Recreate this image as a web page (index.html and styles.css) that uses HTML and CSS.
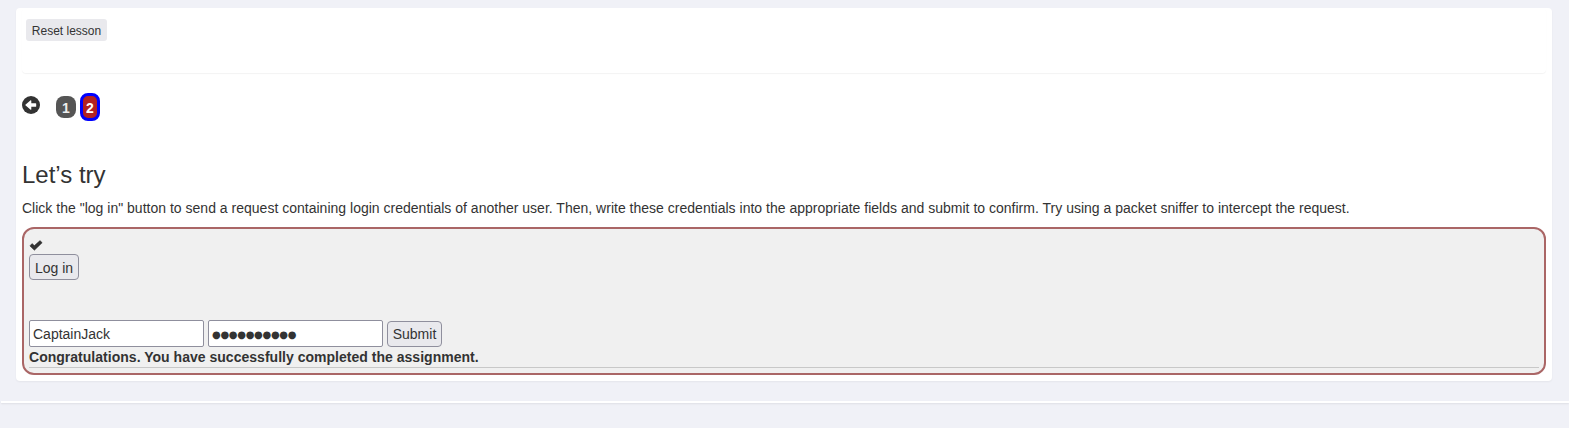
FILE: index.html
```
<!DOCTYPE html>
<html lang="en">
<head>
<meta charset="utf-8">
<title>Lesson</title>
<link rel="stylesheet" href="styles.css">
</head>
<body>
<main class="page">
  <section class="card">
    <div class="toolbar"><button class="reset" type="button">Reset lesson</button></div>
    <nav class="pager">
      <svg class="back" viewBox="0 0 18 18" aria-hidden="true"><circle cx="9" cy="9" r="9" fill="#333"/><path d="M3.1 9 8.6 4.2Q9.3 4 9.3 4.8V7.2H13.6Q14.2 7.2 14.2 7.8V10.2Q14.2 10.8 13.6 10.8H9.3V13.2Q9.3 14 8.6 13.8Z" fill="#fff"/></svg>
      <span class="step">1</span>
      <span class="step current">2</span>
    </nav>
    <h2 class="title">Let’s try</h2>
    <p class="intro">Click the "log in" button to send a request containing login credentials of another user. Then, write these credentials into the appropriate fields and submit to confirm. Try using a packet sniffer to intercept the request.</p>
    <div class="attack">
      <svg class="check" viewBox="0 0 14 11" aria-hidden="true"><path d="M.9 5.9 3 3.6 5.4 5.6 11 .6 13.2 2.7 5.4 10.3Z" fill="#333" stroke="#333" stroke-width=".5" stroke-linejoin="round"/></svg>
      <button class="btn login" type="button">Log in</button>
      <form class="credentials">
        <input class="field" type="text" value="CaptainJack">
        <div class="field secret">●●●●●●●●●●</div>
        <button class="btn submit" type="button">Submit</button>
      </form>
      <div class="feedback">Congratulations. You have successfully completed the assignment.</div>
    </div>
  </section>
  <div class="strip"></div>
</main>
</body>
</html>
```
FILE: styles.css
```
* { box-sizing: border-box; }
body {
  margin: 0;
  background: #fff;
  color: #333;
  font: 14px/20px "Liberation Sans", Arial, sans-serif;
}
button, input { font: inherit; color: inherit; margin: 0; }
.page { height: 428px; padding: 8px 0 0; background: #f0f1f7; }
.card {
  height: 373px;
  margin: 0 17px 0 16px;
  padding: 0 6px;
  background: #fff;
  border-radius: 4px;
  box-shadow: 0 1px 2px rgba(0, 0, 0, .05);
}
.toolbar {
  height: 65px;
  padding: 11px 4px 0;
  border-radius: 4px;
  box-shadow: 0 1px 1px rgba(0, 0, 0, .05);
}
.reset {
  display: block;
  width: 81px;
  height: 22px;
  padding: 2px 0 0;
  border: 0;
  border-radius: 3px;
  background: #e9e9ed;
  font-size: 12px;
  line-height: 18px;
}
.pager { display: flex; align-items: flex-start; height: 48px; padding-top: 20px; }
.back { width: 18px; height: 18px; margin: 3px 16px 0 0; }
.step {
  width: 20px;
  height: 22px;
  margin: 3px 4px 0 0;
  border-radius: 8px;
  background: #555;
  color: #eee;
  font-weight: bold;
  line-height: 24px;
  text-align: center;
}
.current {
  height: 28px;
  margin-top: 0;
  border: 3px solid #00f;
  background: #b22222;
  color: #fff;
}
.title { margin: 41px 0 0; font-size: 24px; font-weight: 400; line-height: 26px; }
.intro { margin: 10px 0 9px; white-space: nowrap; letter-spacing: .01px; }
.attack {
  height: 148px;
  padding: 11px 5px 0;
  border: 2px solid #a66;
  border-radius: 12px;
  background: #f0f0f0;
}
.check { display: block; width: 14px; height: 11px; }
.btn {
  display: block;
  height: 26px;
  padding: 0;
  border: 1px solid #8f8f9d;
  border-radius: 4px;
  background: #e9e9ed;
}
.login { width: 50px; margin-top: 3px; padding-top: 2px; }
.credentials { display: flex; gap: 4px; margin: 40px 0 0; }
.field {
  width: 175px;
  height: 27px;
  padding: 1px 3px;
  border: 1px solid #8f8f9d;
  border-radius: 2px;
  background: #fff;
}
.secret {
  padding-top: 3px;
  font-family: "DejaVu Sans", sans-serif;
  font-size: 10px;
  line-height: 21px;
  letter-spacing: -.31px;
}
.submit { width: 55px; margin-top: 1px; }
.feedback {
  height: 21px;
  border-bottom: 1px solid #c8c8c8;
  font-weight: bold;
  line-height: 20px;
  letter-spacing: .02px;
}
.strip { height: 2px; margin: 20px 0 0 1px; background: #fff; box-shadow: 0 1px 2px rgba(0, 0, 0, .08); }
```
